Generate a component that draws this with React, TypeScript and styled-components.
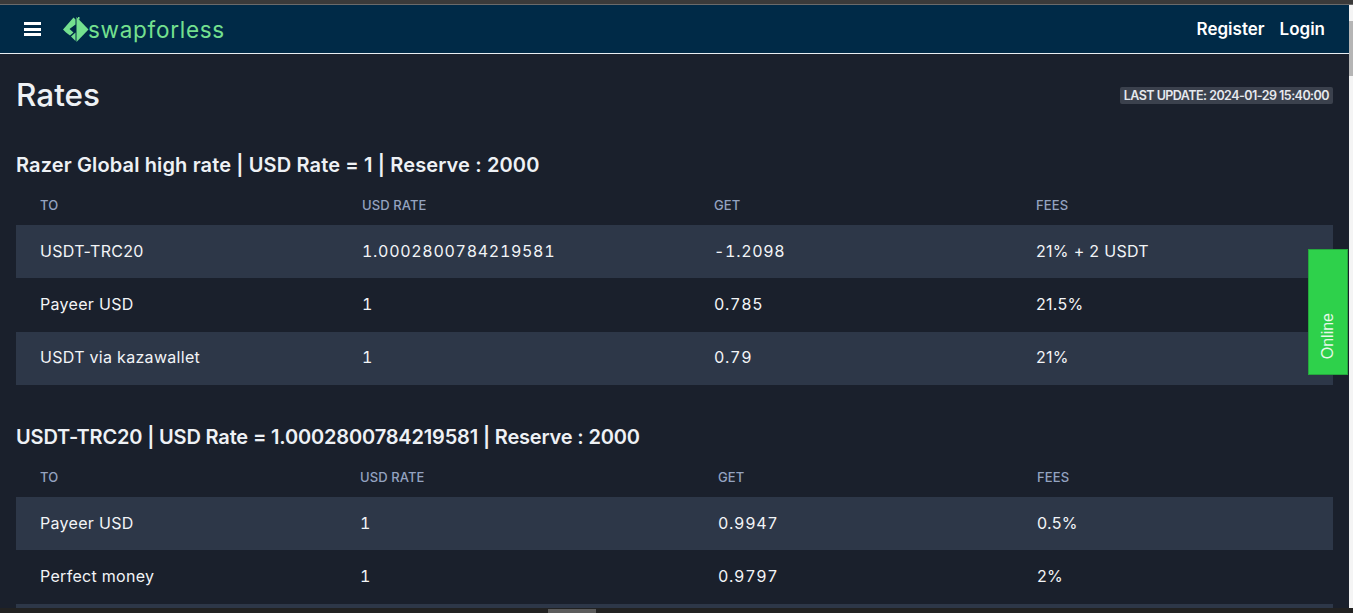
import React from "react";
import styled, { createGlobalStyle } from "styled-components";

const Global = createGlobalStyle`
  html, body { margin: 0; padding: 0; height: 100%; overflow: hidden; background: #1a202c; }
  #root { height: 100%; }
  * { box-sizing: border-box; }
`;

const Page = styled.div`
  position: relative;
  width: 1353px;
  height: 613px;
  overflow: hidden;
  background: #1a202c;
  color: #f2f4f7;
  font-family: Inter, "Open Sans", "Liberation Sans", sans-serif;
`;

const TopStrip = styled.div`
  height: 5px;
  background: linear-gradient(#3a3a3a 0 4px, #6a6a6a 4px);
`;

const Nav = styled.header`
  height: 49px;
  margin-right: 4px;
  background: #002a47;
  border-bottom: 1px solid #e8eef2;
  display: flex;
  align-items: center;
  justify-content: space-between;
  padding: 0 24px;
`;

const Brand = styled.div`
  display: flex;
  align-items: center;
`;

const Burger = styled.div`
  width: 17px;
  height: 14px;
  display: flex;
  flex-direction: column;
  justify-content: space-between;
  margin-right: 22px;
  & > i { display: block; height: 3px; background: #fff; }
`;

const LogoText = styled.span`
  font-size: 22.5px;
  font-weight: 400;
  color: #74e08f;
  letter-spacing: 0.72px;
  margin-left: -1px;
`;

const NavLinks = styled.nav`
  display: flex;
  gap: 15px;
  font-size: 17px;
  font-weight: 600;
  color: #fff;
`;

const Main = styled.main`
  padding: 0 20px 0 16px;
`;

const HeadRow = styled.div`
  display: flex;
  justify-content: space-between;
  align-items: center;
  height: 80px;
  margin-bottom: 11px;
`;

const Title = styled.h1`
  margin: 0;
  font-size: 31.5px;
  font-weight: 500;
  color: #eef1f5;
`;

const Badge = styled.span`
  margin-top: 2px;
  font-size: 12.5px;
  font-weight: 600;
  line-height: 17px;
  padding: 0 4px;
  background: #3b414d;
  color: #e6e9ee;
  border-radius: 2px;
  letter-spacing: -0.53px;
  text-transform: uppercase;
`;

const Section = styled.section`
  margin-bottom: 32px;
`;

const SectionTitle = styled.h2<{ $tracking: number }>`
  margin: 0;
  height: 40px;
  display: flex;
  align-items: center;
  font-size: 20px;
  font-weight: 600;
  letter-spacing: ${(p) => p.$tracking}px;
  color: #eef1f5;
`;

const Row = styled.div<{ $cols: string; $even?: boolean }>`
  display: grid;
  grid-template-columns: ${(p) => p.$cols};
  align-items: center;
  padding: 0 0 2px 24px;
  height: 53.33px;
  background: ${(p) => (p.$even ? "transparent" : "#2d3748")};
  font-size: 16px;
  color: #f2f4f7;
`;

const Cell = styled.span<{ $numeric?: boolean }>`
  letter-spacing: ${(p) => (p.$numeric ? "0.7px" : "0.3px")};
  font-variant-numeric: ${(p) => (p.$numeric ? "tabular-nums" : "normal")};
`;

const HeaderRow = styled.div<{ $cols: string }>`
  display: grid;
  grid-template-columns: ${(p) => p.$cols};
  align-items: center;
  padding-left: 24px;
  height: 40px;
  font-size: 13px;
  font-weight: 500;
  letter-spacing: 0.1px;
  color: #94a3c0;
`;

const OnlineTab = styled.div`
  position: absolute;
  top: 249px;
  left: 1308px;
  width: 40px;
  height: 126px;
  background: #2ed14b;
  border: 1px solid #26a83e;
  display: flex;
  align-items: flex-end;
  justify-content: center;
  padding-bottom: 15px;
`;

const OnlineLabel = styled.span`
  writing-mode: vertical-rl;
  transform: rotate(180deg);
  font-family: "Liberation Sans", Arial, sans-serif;
  font-size: 16px;
  color: #e8f8ea;
`;

const VScroll = styled.div`
  position: absolute;
  top: 5px;
  right: 0;
  width: 4px;
  height: 603px;
  background: #f4f4f4;
  &::after {
    content: "";
    display: block;
    margin-top: 16px;
    height: 55px;
    background: #b5b5b5;
  }
`;

const HScroll = styled.div`
  position: absolute;
  left: 0;
  right: 0;
  bottom: 0;
  height: 5px;
  background: #222;
  &::after {
    content: "";
    position: absolute;
    left: 548px;
    top: 1px;
    width: 48px;
    height: 4px;
    background: #5c5c5c;
  }
`;

type Rate = [string, string, string, string];

const tableA: Rate[] = [
  ["USDT-TRC20", "1.0002800784219581", "-1.2098", "21% + 2 USDT"],
  ["Payeer USD", "1", "0.785", "21.5%"],
  ["USDT via kazawallet", "1", "0.79", "21%"],
];
const tableB: Rate[] = [
  ["Payeer USD", "1", "0.9947", "0.5%"],
  ["Perfect money", "1", "0.9797", "2%"],
  ["", "", "", ""],
];

const RateTable = ({
  title,
  tracking,
  cols,
  rows,
}: {
  title: string;
  tracking: number;
  cols: string;
  rows: Rate[];
}) => (
  <Section>
    <SectionTitle $tracking={tracking}>{title}</SectionTitle>
    <HeaderRow $cols={cols}>
      <span>TO</span>
      <span>USD RATE</span>
      <span>GET</span>
      <span>FEES</span>
    </HeaderRow>
    {rows.map((r, i) => (
      <Row key={i} $cols={cols} $even={i % 2 === 1}>
        {r.map((c, j) => (
          <Cell key={j} $numeric={j === 1 || j === 2}>
            {c}
          </Cell>
        ))}
      </Row>
    ))}
  </Section>
);

const Logo = () => (
  <svg width="26" height="27" viewBox="0 0 26 27" fill="#74e08f">
    <path d="M13.5 1 L25.5 13.5 L13.5 26 Z" />
    <path d="M10.5 1.5 L12.5 3.5 L12.5 8.5 L6.5 13 L10.5 16.5 L7 19.5 L3 16.5 L0 13.5 Z" />
    <path d="M12.5 16.5 L12.5 25 L10 22.5 L8 20.5 Z" />
    <path d="M15 1 L16.5 1 L16.5 3.5 L15 3 Z" />
  </svg>
);

export default function App() {
  return (
    <Page>
      <Global />
      <TopStrip />
      <Nav>
        <Brand>
          <Burger>
            <i />
            <i />
            <i />
          </Burger>
          <Logo />
          <LogoText>swapforless</LogoText>
        </Brand>
        <NavLinks>
          <span>Register</span>
          <span>Login</span>
        </NavLinks>
      </Nav>
      <Main>
        <HeadRow>
          <Title>Rates</Title>
          <Badge>Last Update: 2024-01-29 15:40:00</Badge>
        </HeadRow>
        <RateTable
          title="Razer Global high rate | USD Rate = 1 | Reserve : 2000"
          tracking={0.13}
          cols="322px 352px 322px 1fr"
          rows={tableA}
        />
        <RateTable
          title="USDT-TRC20 | USD Rate = 1.0002800784219581 | Reserve : 2000"
          tracking={-0.17}
          cols="320px 358px 319px 1fr"
          rows={tableB}
        />
      </Main>
      <OnlineTab>
        <OnlineLabel>Online</OnlineLabel>
      </OnlineTab>
      <VScroll />
      <HScroll />
    </Page>
  );
}
